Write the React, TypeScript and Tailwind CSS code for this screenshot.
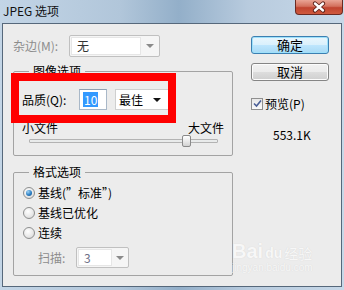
import React from "react"

const Arrow = ({ color }: { color: string }) => (
    <span className={"block w-0 h-0 border-x-[4px] border-t-[4px] border-x-transparent " + color} />
)

const Radio = ({ checked, label }: { checked?: boolean; label: string }) => (
    <div className="h-[20px] flex items-center">
        <span className="ml-[1px] w-[12px] h-[12px] rounded-full border border-[#8e8f8f] bg-[radial-gradient(circle_at_40%_35%,#ffffff_0%,#e6e6e6_60%,#cfcfcf_100%)] flex items-center justify-center">
            {checked && (
                <span className="w-[6px] h-[6px] rounded-full bg-[radial-gradient(circle_at_35%_30%,#9fd3f5_0%,#2a7ec3_55%,#124a85_100%)]" />
            )}
        </span>
        <span className="ml-[3px] leading-[14px]">{label}</span>
    </div>
)

export default function App() {
    return (
        <div className="relative w-[344px] h-[290px] overflow-hidden flex flex-col bg-[linear-gradient(90deg,#c3d5e6_0%,#b1c6da_35%,#93afc9_52%,#b8cbde_72%,#c7d8e8_100%)] font-['Noto_Sans_CJK_SC','Noto_Sans',sans-serif] text-[12px] text-black">
            {/* title bar */}
            <div className="h-[23px] flex items-start justify-between">
                <span className="pl-[3px] pt-[2px] leading-[17px] text-[12px] text-[#111]">JPEG 选项</span>
                <div className="mr-[1px] w-[48px] h-[15px] rounded-b-[4px] border border-t-0 border-[#6b2a22] bg-[linear-gradient(180deg,#e9a595_0%,#d3705c_45%,#c0442f_55%,#cf5a3e_100%)] flex items-center justify-center">
                    <svg width="16" height="12" viewBox="0 0 16 12">
                        <path d="M4 2.5 L12 9.5 M12 2.5 L4 9.5" stroke="#5a2018" strokeWidth="4.2" strokeLinecap="round" />
                        <path d="M4 2.5 L12 9.5 M12 2.5 L4 9.5" stroke="#ffffff" strokeWidth="2.4" strokeLinecap="round" />
                    </svg>
                </div>
            </div>

            {/* client area */}
            <div className="mx-[2px] h-[264px] border border-[#56687b] bg-[#ececec] flex pl-[10px] pt-[11px]">
                {/* left column */}
                <div className="w-[220px] flex flex-col">
                    <div className="h-[22px] flex items-center">
                        <span className="w-[56px] text-[#8c8c8c] leading-[14px]">杂边(M):</span>
                        <div className="w-[91px] h-[22px] border border-[#c0c0c0] rounded-[2px] bg-[#f5f5f5] flex items-center p-[1px]">
                            <div className="w-[70px] h-full bg-white border border-[#e6e6e6] flex items-center pl-[5px] leading-[14px] text-[#333]">无</div>
                            <div className="flex-1 flex justify-center">
                                <Arrow color="border-t-[#8a8a8a]" />
                            </div>
                        </div>
                    </div>

                    <fieldset className="mt-[6px] h-[93px] border border-[#a3a3a3] rounded-[2px] px-[8px]">
                        <legend className="ml-[7px] px-[4px] leading-[16px]">图像选项</legend>
                        <div className="pt-[10px] h-[31px] flex items-center">
                            <span className="w-[57px] leading-[14px]">品质(Q):</span>
                            <div className="w-[28px] h-[21px] border border-[#a9b8c8] border-t-[#8e9fb2] bg-white flex items-center pl-[3px]">
                                <span className="bg-[#3399ff] text-white leading-[15px] px-[1px]">10</span>
                            </div>
                            <div className="ml-[8px] w-[54px] h-[21px] border border-[#cfcfcf] bg-white flex items-center justify-between pl-[3px] pr-[7px]">
                                <span className="leading-[14px]">最佳</span>
                                <Arrow color="border-t-[#111]" />
                            </div>
                        </div>
                        <div className="mt-[11px] h-[14px] flex justify-between leading-[14px]">
                            <span>小文件</span>
                            <span>大文件</span>
                        </div>
                        <div className="h-[12px] pl-[7px] pr-[6px] flex items-center">
                            <div className="relative w-full h-[4px] border border-[#b3b3b3] bg-[#e9ebeb] rounded-[1px]">
                                <div className="absolute left-[152px] top-[-5px] w-[9px] h-[12px] border border-[#8a8a8a] rounded-[2px] bg-[linear-gradient(180deg,#ffffff_0%,#e6e6e6_60%,#d2d2d2_100%)]" />
                            </div>
                        </div>
                    </fieldset>

                    <fieldset className="mt-[8px] h-[112px] border border-[#a3a3a3] rounded-[2px] px-[8px]">
                        <legend className="ml-[7px] px-[4px] leading-[16px]">格式选项</legend>
                        <div className="pt-[3px]">
                            <Radio checked label={"基线(”标准”)"} />
                            <Radio label="基线已优化" />
                            <Radio label="连续" />
                        </div>
                        <div className="mt-[4px] h-[21px] flex items-center">
                            <span className="ml-[16px] w-[38px] text-[#8c8c8c] leading-[14px]">扫描:</span>
                            <div className="w-[53px] h-[21px] border border-[#c0c0c0] rounded-[2px] bg-[#f5f5f5] flex items-center p-[1px]">
                                <div className="w-[34px] h-full bg-white border border-[#e6e6e6] flex items-center pl-[5px] leading-[14px] text-[#6e7087]">3</div>
                                <div className="flex-1 flex justify-center">
                                    <Arrow color="border-t-[#8a8a8a]" />
                                </div>
                            </div>
                        </div>
                    </fieldset>
                </div>

                {/* right column */}
                <div className="ml-[18px] w-[78px] flex flex-col">
                    <button className="mt-[1px] h-[18px] rounded-[3px] border border-[#3c7fb1] bg-[linear-gradient(180deg,#eaf6fd_0%,#d9f0fc_50%,#bee6fd_51%,#a7d9f5_100%)] shadow-[inset_0_0_0_1px_#9ee1fb] text-[13px] leading-[14px]">确定</button>
                    <button className="mt-[9px] h-[18px] rounded-[3px] border border-[#858585] bg-[linear-gradient(180deg,#f2f2f2_0%,#ebebeb_50%,#dddddd_51%,#cfcfcf_100%)] shadow-[inset_0_0_0_1px_#fcfcfc] text-[13px] leading-[14px]">取消</button>
                    <div className="mt-[16px] h-[13px] flex items-center">
                        <span className="w-[12px] h-[12px] border border-[#8f8f8f] bg-[linear-gradient(180deg,#e8e8e8,#fafafa)] flex items-center justify-center">
                            <svg width="9" height="9" viewBox="0 0 9 9">
                                <path d="M1 4.5 L3.5 7 L8 1.5" fill="none" stroke="#4a5f97" strokeWidth="1.6" />
                            </svg>
                        </span>
                        <span className="ml-[2px] leading-[14px]">预览(P)</span>
                    </div>
                    <span className="mt-[18px] ml-[22px] leading-[14px]">553.1K</span>
                </div>
            </div>

            {/* red annotation */}
            <div className="absolute left-[11px] top-[73px] w-[165px] h-[50px] border-[8px] border-[#ff0000]" />

            {/* watermark */}
            <div className="absolute left-[232px] top-[240px] flex flex-col text-white [text-shadow:0_0_1px_rgba(0,0,0,0.18)] font-['Liberation_Sans',sans-serif] opacity-60">
                <div className="flex items-end gap-[2px]">
                    <span className="text-[20px] font-bold leading-[22px]">Bai</span>
                    <span className="text-[14px] font-bold leading-[18px]">du</span>
                    <span className="text-[14px] leading-[18px] font-['Noto_Sans_CJK_SC',sans-serif]">经验</span>
                </div>
                <span className="text-[10px] leading-[12px]">jingyan.baidu.com</span>
            </div>
        </div>
    )
}
